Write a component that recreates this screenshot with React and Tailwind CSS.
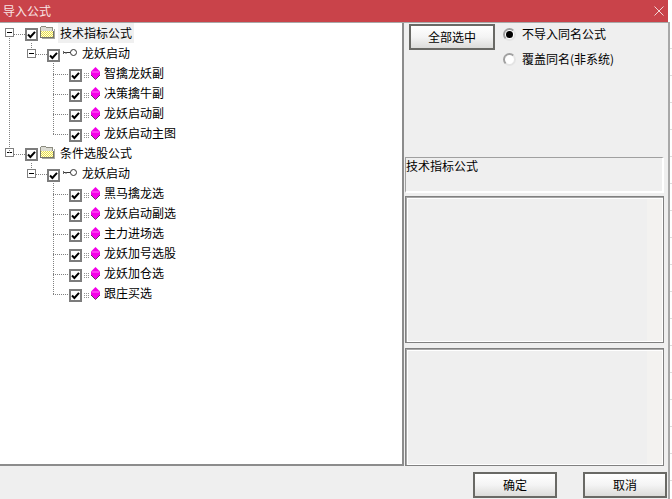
const font = { fontFamily: '"Noto Sans CJK SC", "Liberation Sans", sans-serif' };

function Expander({ className }) {
  return (
    <div className={`w-[9px] h-[9px] border border-[#808080] bg-white flex items-center justify-center shrink-0 ${className}`}>
      <div className="w-[5px] h-px bg-black" />
    </div>
  );
}

function Check({ className }) {
  return (
    <div className={`w-[13px] h-[13px] border-2 border-[#7c7c7c] bg-white flex items-center justify-center shrink-0 ${className}`}>
      <svg width="9" height="9" viewBox="0 0 9 9">
        <path d="M1 4.5 3.4 7 8 1.8" stroke="#000" strokeWidth="2" fill="none" />
      </svg>
    </div>
  );
}

function Folder() {
  return (
    <svg width="16" height="14" viewBox="0 0 16 14" className="shrink-0 mt-[2px] ml-[1px]" shapeRendering="crispEdges">
      <defs>
        <pattern id="dith" width="2" height="2" patternUnits="userSpaceOnUse">
          <rect width="2" height="2" fill="#fffde0" />
          <rect width="1" height="1" fill="#e6de48" />
          <rect x="1" y="1" width="1" height="1" fill="#e6de48" />
        </pattern>
      </defs>
      <path d="M1.5 6.5V2.5l1-1.5h4l1 1.5h6v4z" fill="#dcdcd4" stroke="#8c8c80" strokeWidth="1" />
      <rect x="1.5" y="5.5" width="13" height="7" fill="url(#dith)" />
      <path d="M1.5 5.5v7h13v-7" fill="none" stroke="#74746a" strokeWidth="1" />
      <path d="M15.5 4v9.5H2.5" fill="none" stroke="#a8a8a0" strokeWidth="1" />
    </svg>
  );
}

function KeyIcon() {
  return (
    <svg width="16" height="10" viewBox="0 0 16 10" className="shrink-0 mt-[5px] ml-[2px]">
      <circle cx="11.5" cy="4.5" r="3" fill="#fff" stroke="#333" strokeWidth="1" />
      <path d="M1 4.5h7.5" stroke="#333" strokeWidth="1" />
      <path d="M1.5 3v3M4 4v2" stroke="#666" strokeWidth="1" />
    </svg>
  );
}

function Gem() {
  return (
    <svg width="16" height="13" viewBox="0 0 16 13" className="shrink-0 mt-[4px] ml-[2px]">
      <path d="M0 6h6M0 8h6M0 10h6" stroke="#909090" strokeWidth="1" strokeDasharray="1 1" shapeRendering="crispEdges" />
      <path d="M11.5 0 16 4.5V8L11.5 12.5 7 8V4.5z" fill="#f400e8" />
      <path d="M7 8 11.5 12.5 16 8" fill="none" stroke="#70306c" strokeWidth="1" />
      <path d="M8 5h7" stroke="#ff70f4" strokeWidth="1" />
    </svg>
  );
}

function Top({ label, selected }) {
  return (
    <div className="flex h-5 pl-[5px]">
      <Expander className="mt-[5px]" />
      <Check className="mt-[5px] ml-[11px]" />
      <Folder />
      <span className={`ml-[3px] px-[2px] h-5 leading-5 ${selected ? "bg-[#f0f0f0]" : ""}`}>{label}</span>
    </div>
  );
}

function Mid({ label }) {
  return (
    <div className="flex h-5 pl-[27px]">
      <Expander className="mt-[6px]" />
      <Check className="mt-[6px] ml-[11px]" />
      <KeyIcon />
      <span className="ml-[2px] px-[2px] h-5 leading-5">{label}</span>
    </div>
  );
}

function Leaf({ label }) {
  return (
    <div className="flex h-5 pl-[69px]">
      <Check className="mt-[6px]" />
      <Gem />
      <span className="ml-[2px] px-[2px] h-5 leading-5">{label}</span>
    </div>
  );
}

function Lines() {
  const d = "M9.5 38V154M14 34H25M14 154H25M31.5 43V50M31.5 163V170M36 54H47M36 174H47M53.5 63V134M53.5 183V294" +
    " M53 74H69M53 94H69M53 114H69M53 134H69M53 194H69M53 214H69M53 234H69M53 254H69M53 274H69M53 294H69";
  return (
    <svg className="absolute left-0 top-0 pointer-events-none" width="100" height="300" viewBox="0 23 100 300" shapeRendering="crispEdges">
      <path d={d} stroke="#808080" strokeWidth="1" strokeDasharray="1 1" fill="none" />
    </svg>
  );
}

function Btn({ children, className }) {
  return (
    <button className={`border-2 border-[#696965] bg-gradient-to-b from-white via-[#f4f4f4] to-[#dcdcda] text-[12px] text-black flex items-center justify-center shrink-0 ${className}`}>
      {children}
    </button>
  );
}

function Radio({ on, label, className }) {
  return (
    <div className={`flex items-center h-[14px] ${className || ""}`}>
      <div className="w-[13px] h-[13px] rounded-full bg-white border-2 border-t-[#a0a0a0] border-l-[#a0a0a0] border-b-[#e4e4e4] border-r-[#e4e4e4] flex items-center justify-center shrink-0">
        {on && <div className="w-[7px] h-[7px] rounded-full bg-black" />}
      </div>
      <span className="ml-[6px] leading-[14px]">{label}</span>
    </div>
  );
}

function Panel({ className }) {
  return (
    <div className={`w-[259px] border border-[#808080] bg-[#a8a8a8] shrink-0 ${className}`}>
      <div className="h-full border-t border-l border-t-[#a8a8a8] border-l-[#a8a8a8]">
        <div className="h-full border border-white bg-[#f3f2f0] flex">
          <div className="w-[239px] h-full bg-[#efefef]" />
        </div>
      </div>
    </div>
  );
}

export default function App() {
  return (
    <div className="w-[672px] h-[499px] bg-white flex overflow-hidden text-[12px] text-black" style={font}>
      <div className="w-[668px] h-full flex flex-col bg-[#efefef] shrink-0">
        <div className="h-[22px] bg-[#c9434a] flex items-center justify-between pl-[3px] pr-[4px] shrink-0">
          <span className="text-[#f8e4e4] leading-[22px]">导入公式</span>
          <svg width="10" height="10" viewBox="0 0 10 10">
            <path d="M0.5 0.5 9.5 9.5M9.5 0.5 0.5 9.5" stroke="#f3d6d6" strokeWidth="1" />
          </svg>
        </div>
        <div className="h-px bg-[#a8a8a8] shrink-0" />
        <div className="flex h-[443px] shrink-0">
          <div className="relative w-[404px] h-full bg-white border-r-2 border-b-2 border-[#8c8c8c] shrink-0">
            <Lines />
            <Top label="技术指标公式" selected />
            <Mid label="龙妖启动" />
            <Leaf label="智擒龙妖副" />
            <Leaf label="决策擒牛副" />
            <Leaf label="龙妖启动副" />
            <Leaf label="龙妖启动主图" />
            <Top label="条件选股公式" />
            <Mid label="龙妖启动" />
            <Leaf label="黑马擒龙选" />
            <Leaf label="龙妖启动副选" />
            <Leaf label="主力进场选" />
            <Leaf label="龙妖加号选股" />
            <Leaf label="龙妖加仓选" />
            <Leaf label="跟庄买选" />
          </div>
          <div className="flex flex-col pl-px">
            <div className="flex h-[134px] shrink-0">
              <Btn className="w-[86px] h-[26px] ml-[4px] mt-px">全部选中</Btn>
              <div className="flex flex-col ml-[8px] mt-[4px] gap-[11px]">
                <Radio on label="不导入同名公式" />
                <Radio label="覆盖同名(非系统)" />
              </div>
            </div>
            <div className="w-[259px] h-[36px] border-t border-l border-[#a0a0a0] border-b-2 border-r-2 border-b-white border-r-white shrink-0 leading-4">
              技术指标公式
            </div>
            <Panel className="h-[147px] mt-[3px]" />
            <Panel className="h-[118px] mt-[5px]" />
          </div>
        </div>
        <div className="flex justify-end pr-px pt-[6px]">
          <Btn className="w-[84px] h-[26px]">确定</Btn>
          <Btn className="w-[84px] h-[26px] ml-[26px]">取消</Btn>
        </div>
      </div>
      <div className="flex flex-col w-1 shrink-0">
        <div className="h-[22px] bg-white shrink-0" />
        <div className="flex-1 flex">
          <div className="w-[2px] bg-[#a8a8a8]" />
          <div className="w-[2px] bg-[repeating-linear-gradient(to_bottom,#ffffff_0,#ffffff_26px,#dcdcdc_26px,#dcdcdc_27px)]" />
        </div>
      </div>
    </div>
  );
}
